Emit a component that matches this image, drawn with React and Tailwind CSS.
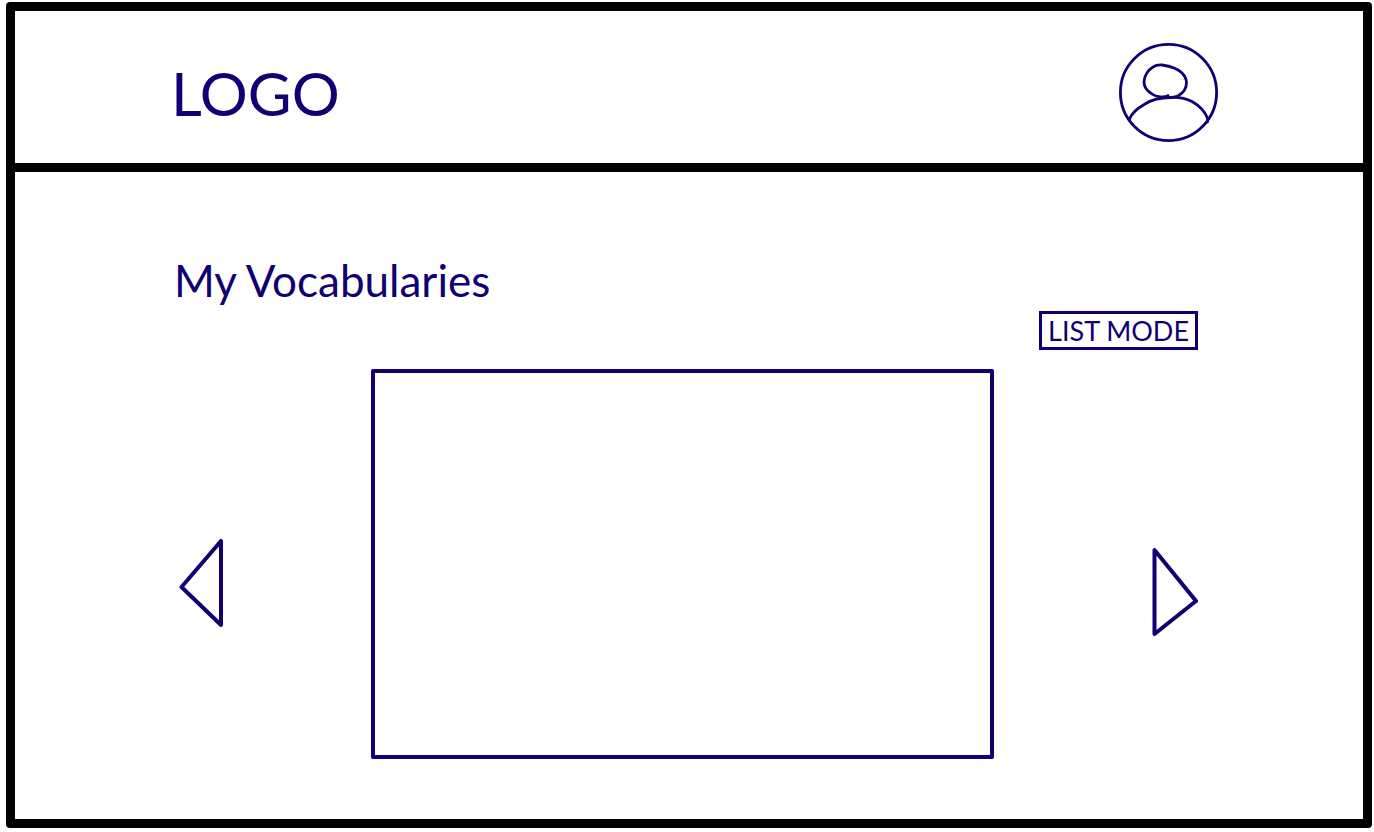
function Avatar() {
  return (
    <svg viewBox="0 0 100 100" className="block size-[100px]" fill="none" stroke="currentColor" strokeWidth="2.8" strokeLinecap="round" strokeLinejoin="round" aria-hidden="true">
      <circle cx="49.500" cy="49.500" r="48.100" />
      <path d="M49 52.500 C46 55 37 54 33 51 C28 48 25 44 25 39 C25 33 29 27 34 24 C37 22 40 21.800 43 22 C50 23 58 25 63 30 C66 33 67.500 36 67.500 40 C67.500 45 64 50 59 53 C55 55 48 54.500 44 54.500" />
      <path d="M10.500 76 C13 69 19 65 26 61 C35 55 44 54.500 52 54.500 C59 54 66 55 73 58.500 C81 63 86 69 88.500 75 L88.500 79" />
    </svg>
  );
}

function PreviousIcon() {
  return (
    <svg viewBox="0 0 46 90" className="block h-[90px] w-[46px]" fill="none" stroke="currentColor" strokeWidth="4" strokeLinecap="round" strokeLinejoin="round" aria-hidden="true">
      <path d="M42 2 V86 L2.500 48 Z" />
    </svg>
  );
}

function NextIcon() {
  return (
    <svg viewBox="0 0 46 90" className="block h-[90px] w-[46px]" fill="none" stroke="currentColor" strokeWidth="4" strokeLinecap="round" strokeLinejoin="round" aria-hidden="true">
      <path d="M2.500 3 V87 L44 54 Z" />
    </svg>
  );
}

export default function App() {
  return (
    <div className="flex min-h-screen flex-col bg-white pt-0.5 pr-0.5 pb-1 pl-1.5 font-[Lato,'Liberation_Sans',sans-serif] text-[#100073]">
      <div className="flex flex-1 flex-col rounded-sm border-[9px] border-black">
        <header className="flex items-center justify-between border-b-[9px] border-black pt-8 pr-36 pb-5 pl-[156px]">
          <a href="#home" className="text-[60px] leading-[100px]">LOGO</a>
          <button type="button" aria-label="Profile" className="rounded-full">
            <Avatar />
          </button>
        </header>
        <main className="flex flex-1 flex-col pt-[78px] pr-[165px] pb-[60px] pl-[159px]">
          <h1 className="text-[44px] leading-[60px]">My Vocabularies</h1>
          <button type="button" className="mt-px h-[39px] self-end border-[3px] border-current px-1.5 text-[27px] leading-8">
            LIST MODE
          </button>
          <section aria-label="Vocabulary cards" className="mt-[19px] flex flex-1 items-center pl-[5px]">
            <button type="button" aria-label="Previous" className="mt-10">
              <PreviousIcon />
            </button>
            <article aria-label="Card" className="mr-[158px] ml-[146px] min-w-0 flex-1 self-stretch rounded-xs border-4 border-current" />
            <button type="button" aria-label="Next" className="mt-14">
              <NextIcon />
            </button>
          </section>
        </main>
      </div>
    </div>
  );
}
